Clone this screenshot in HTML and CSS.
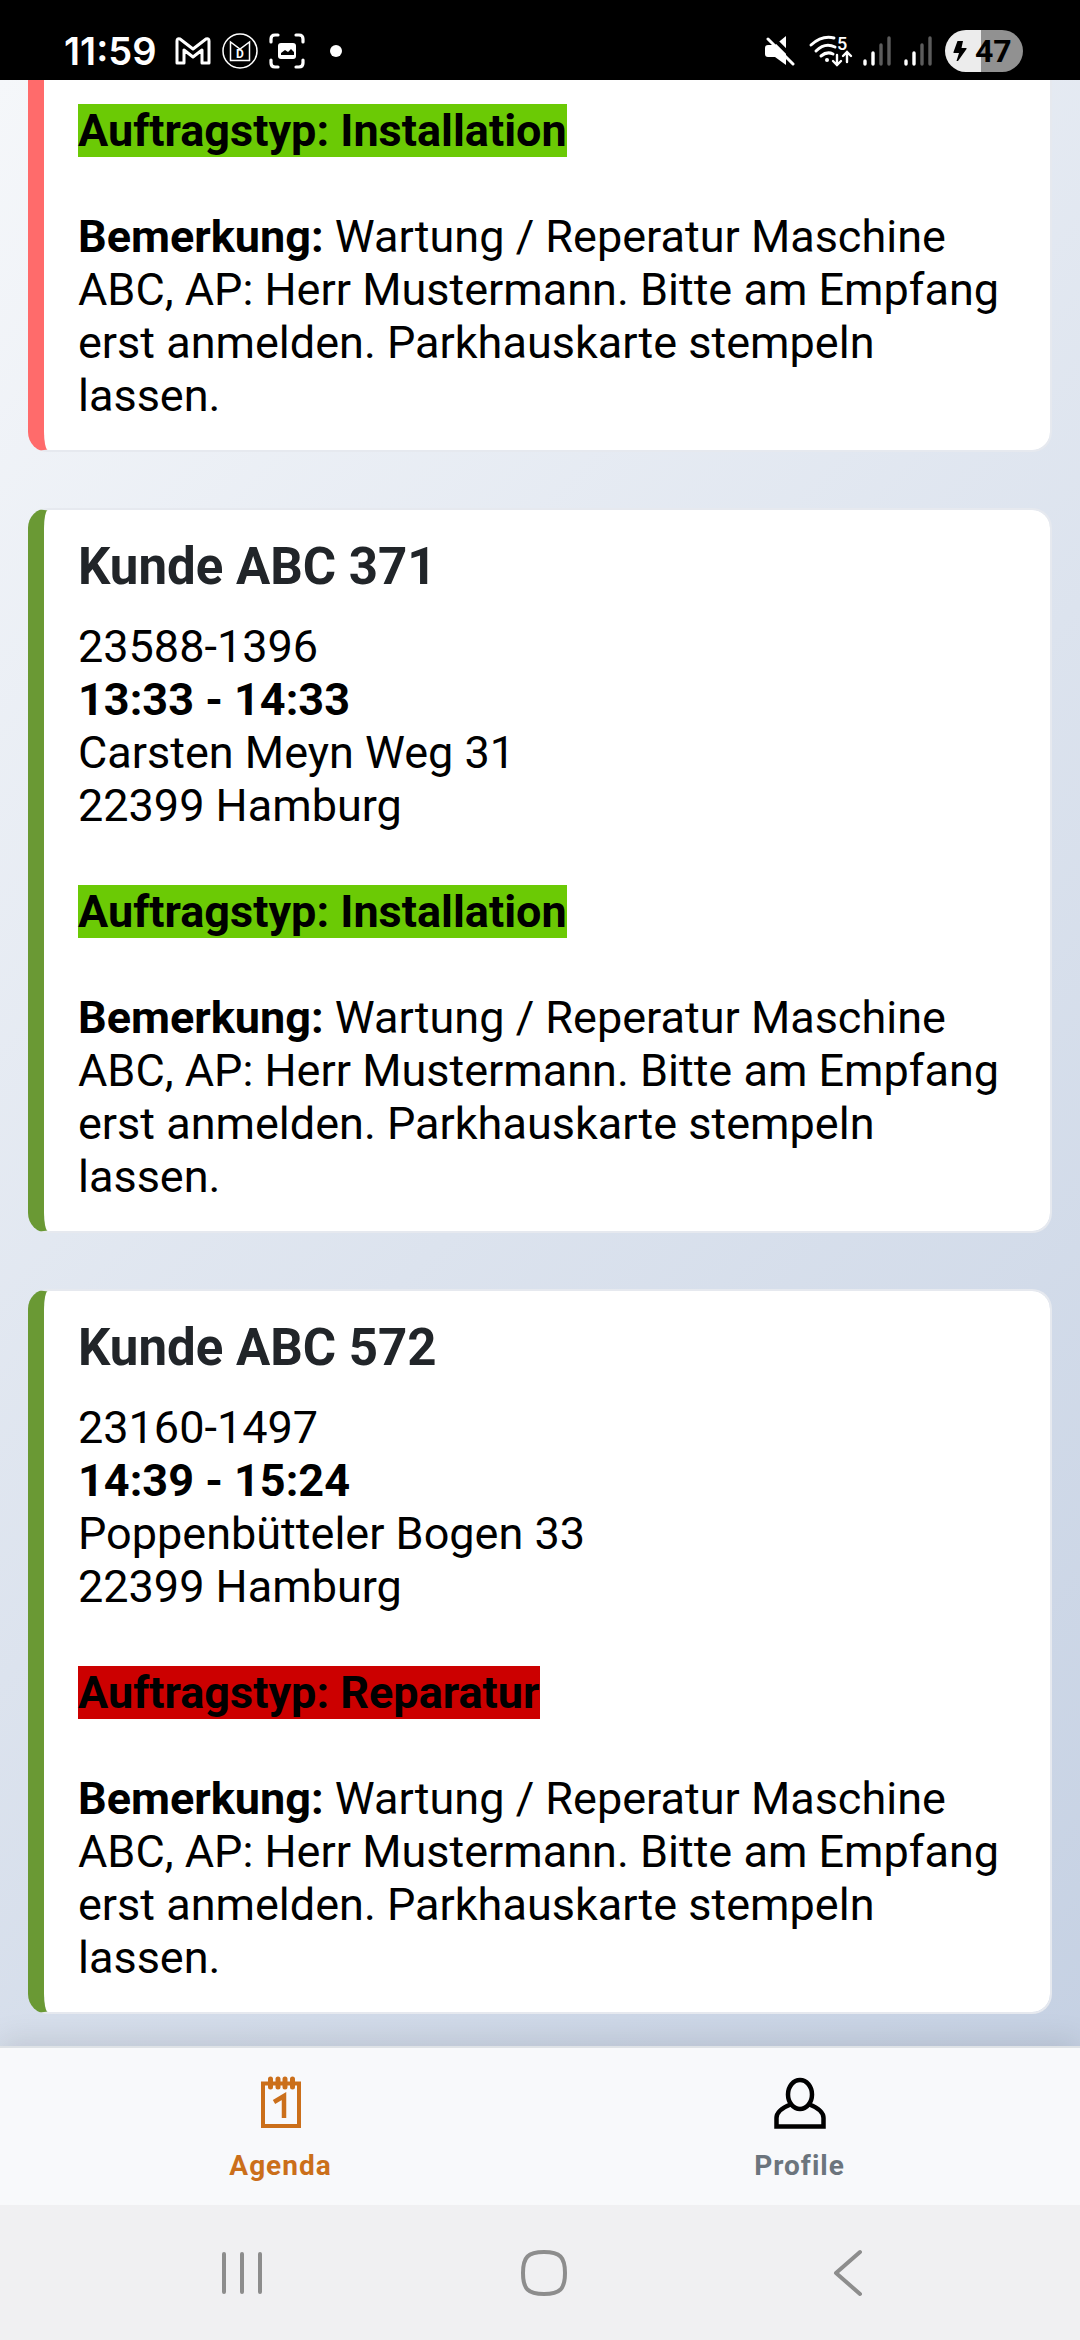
FILE: index.html
```html
<!DOCTYPE html>
<html lang="de">
<head>
<meta charset="utf-8">
<meta name="viewport" content="width=device-width, initial-scale=1">
<title>Agenda</title>
<link rel="stylesheet" href="styles.css">
</head>
<body>
<header class="status">
  <div class="status-left">
    <span class="clock">11:59</span>
    <svg width="36" height="30" viewBox="0 0 36 30" fill="none" stroke="#fff" stroke-width="3" stroke-linejoin="round"><path d="M2 27V5Q2 2 5 3L18 13L31 3Q34 2 34 5V27H27V14L18 21L9 14V27Z"/></svg>
    <svg width="36" height="36" viewBox="0 0 36 36" fill="none" stroke="#fff" stroke-width="1.500"><circle cx="18" cy="18" r="17"/><path d="M8.500 27.500V9L18 16L27.500 9V27.500Z"/><text class="badge-letter" x="14" y="25">D</text></svg>
    <svg width="36" height="36" viewBox="0 0 36 36" fill="none" stroke="#fff" stroke-width="3.200" stroke-linecap="round"><path d="M2 9V6Q2 2 6 2H9M27 2H30Q34 2 34 6V9M34 27V30Q34 34 30 34H27M9 34H6Q2 34 2 30V27"/><rect x="9" y="10" width="18" height="16" rx="3" fill="#fff" stroke="none"/><path d="M12 22V20L16 17L19 19L22 16L25 19V22Z" fill="#000" stroke="none"/></svg>
    <span class="dot"></span>
  </div>
  <div class="status-right">
    <svg width="30" height="30" viewBox="0 0 30 30"><path d="M3 9H10L21 0V29L10 21H3Q0 21 0 18V12Q0 9 3 9Z" fill="#fff"/><path d="M4 -2L32 26" stroke="#000" stroke-width="4"/><path d="M3 3L28 28" stroke="#fff" stroke-width="3" stroke-linecap="round"/></svg>
    <svg class="wifi" width="44" height="32" viewBox="0 0 44 32" fill="none" stroke="#fff" stroke-width="3" stroke-linecap="round"><path d="M2 10Q13 0 25 3M7 16Q16 7 26 12M12 21Q18 16 24 19"/><circle cx="18" cy="25" r="2" fill="#fff" stroke="none"/><text class="wifi-band" x="28" y="15">5</text><path d="M28 20V30M24 26L28 30L32 26M38 27V18M34 21L38 17L42 21" stroke-width="2.400"/></svg>
    <svg class="signal" width="28" height="30" viewBox="0 0 28 30" stroke="#fff" stroke-width="3.400" stroke-linecap="round"><path d="M2 25V28M10 17V28"/><path d="M18 9V28M26 2V28" stroke="#5c5c5c"/></svg>
    <svg class="signal" width="28" height="30" viewBox="0 0 28 30" stroke="#fff" stroke-width="3.400" stroke-linecap="round"><path d="M2 25V28M10 17V28"/><path d="M18 9V28M26 2V28" stroke="#5c5c5c"/></svg>
    <span class="battery"><svg width="14" height="22" viewBox="0 0 14 22"><path d="M4.500 1H10L8.500 8H13Q14 8 13.500 9L5 21H3.500L6 13H1Q0 13 0.500 12Z" fill="#000"/></svg>47</span>
  </div>
</header>

<div class="app">
  <main class="agenda">
    <article class="card card-late card-scrolled">
      <p><strong class="tag-install">Auftragstyp: Installation</strong></p>
      <p class="note"><strong>Bemerkung:</strong> Wartung / Reperatur Maschine ABC, AP: Herr Mustermann. Bitte am Empfang erst anmelden. Parkhauskarte stempeln lassen.</p>
    </article>

    <article class="card">
      <h2 class="customer">Kunde ABC 371</h2>
      <p>23588-1396</p>
      <p><strong>13:33 - 14:33</strong></p>
      <p>Carsten Meyn Weg 31</p>
      <p>22399 Hamburg</p>
      <p class="note"><strong class="tag-install">Auftragstyp: Installation</strong></p>
      <p class="note"><strong>Bemerkung:</strong> Wartung / Reperatur Maschine ABC, AP: Herr Mustermann. Bitte am Empfang erst anmelden. Parkhauskarte stempeln lassen.</p>
    </article>

    <article class="card">
      <h2 class="customer">Kunde ABC 572</h2>
      <p>23160-1497</p>
      <p><strong>14:39 - 15:24</strong></p>
      <p>Poppenbütteler Bogen 33</p>
      <p>22399 Hamburg</p>
      <p class="note"><strong class="tag-repair">Auftragstyp: Reparatur</strong></p>
      <p class="note"><strong>Bemerkung:</strong> Wartung / Reperatur Maschine ABC, AP: Herr Mustermann. Bitte am Empfang erst anmelden. Parkhauskarte stempeln lassen.</p>
    </article>
  </main>

  <nav class="tabs">
    <a class="tab tab-active" href="#agenda">
      <svg width="56" height="56" viewBox="0 0 56 56" fill="none" stroke="currentColor" stroke-width="4"><path d="M10 8.500H46V51H10Z"/><path d="M17.500 4V12M25 4V12M32 4V12M39.500 4V12" stroke-width="5" stroke-linecap="round"/><path d="M21 27L31 21V43" stroke-width="4.500"/></svg>
      <span>Agenda</span>
    </a>
    <a class="tab" href="#profile">
      <svg width="56" height="56" viewBox="0 0 56 56" fill="none" stroke="#000" stroke-width="4.500"><ellipse cx="28" cy="19.500" rx="12" ry="14.500"/><path d="M18.500 29.500Q4.500 35 4.500 43V51.500H51.500V43Q51.500 35 37.500 29.500"/></svg>
      <span>Profile</span>
    </a>
  </nav>
</div>

<footer class="system">
  <button class="key" type="button" aria-label="Letzte Apps"><svg width="48" height="48" viewBox="0 0 48 48"><path d="M6 5V43M24 5V43M42 5V43"/></svg></button>
  <button class="key" type="button" aria-label="Home"><svg width="48" height="48" viewBox="0 0 48 48"><path d="M24 3C40 3 45 8 45 24S40 45 24 45S3 40 3 24S8 3 24 3Z"/></svg></button>
  <button class="key" type="button" aria-label="Zurück"><svg width="48" height="48" viewBox="0 0 48 48"><path d="M37 3L13 24L37 45"/></svg></button>
</footer>
</body>
</html>
```

FILE: styles.css
```css
* { box-sizing: border-box; }

body {
  margin: 0;
  min-height: 100vh;
  display: flex;
  flex-direction: column;
  font-family: Roboto, "Liberation Sans", sans-serif;
  font-size: 45px;
  line-height: 53px;
  color: #000;
}

p, h2 { margin: 0; }
svg { display: block; flex: none; }

.status {
  height: 80px;
  padding: 22px 57px 0 64px;
  display: flex;
  justify-content: space-between;
  background: #000;
  color: #fff;
}

.status-left, .status-right {
  height: 58px;
  display: flex;
  align-items: center;
}
.status-left { gap: 11px; }

.clock {
  font-family: Inter, Roboto, sans-serif;
  font-size: 38px;
  font-weight: 600;
  margin-right: 8px;
}

.badge-letter {
  fill: #fff;
  stroke: none;
  font-size: 12px;
  font-weight: 700;
}

.wifi-band {
  fill: #fff;
  stroke: none;
  font-size: 18px;
  font-weight: 500;
}

.dot {
  width: 12px;
  height: 12px;
  margin-left: 14px;
  border-radius: 50%;
  background: #fff;
}

.wifi { margin: 0 10px 0 14px; overflow: visible; }
.signal { margin-right: 13px; }

.battery {
  width: 78px;
  height: 42px;
  display: flex;
  align-items: center;
  gap: 8px;
  padding-left: 8px;
  border-radius: 21px;
  background: linear-gradient(90deg, #ececec 46%, #919191 46%);
  color: #000;
  font-size: 32px;
  font-weight: 700;
}

.app {
  flex: 1;
  display: flex;
  flex-direction: column;
  background: linear-gradient(135deg, #f5f7fa 0%, #c3cfe2 100%);
}

.agenda {
  flex: 1;
  display: flex;
  flex-direction: column;
  gap: 56px;
  padding: 0 28px 32px;
}

.card {
  padding: 28px 32px 28px 34px;
  border: 2px solid #e6e9ef;
  border-left: 16px solid #6a9934;
  border-radius: 20px;
  background: #fff;
  background-clip: padding-box;
}

.card-late { border-left-color: #ff6b6b; }

/* Upper part of this card is scrolled beneath the status bar. */
.card-scrolled {
  padding-top: 24px;
  border-top: 0;
  border-top-left-radius: 0;
  border-top-right-radius: 0;
}

.customer {
  margin-bottom: 24px;
  font-size: 51px;
  line-height: 58px;
  font-weight: 700;
  color: #212529;
}

.note { margin-top: 53px; }

.tag-install { background: #6bca05; }
.tag-repair { background: #cc0000; }

.tabs {
  display: grid;
  grid-template-columns: 1fr 1fr;
  padding: 27px 21px 22px;
  border-top: 2px solid #dee2e6;
  background: #f8f9fb;
  box-shadow: 0 -6px 28px rgba(0, 0, 0, 0.1);
}

.tab {
  display: flex;
  flex-direction: column;
  align-items: center;
  gap: 18px;
  color: #6c757d;
  font-size: 28px;
  line-height: 34px;
  font-weight: 700;
  letter-spacing: 1px;
  text-decoration: none;
}
.tab-active { color: #cb6f1a; }

.system {
  display: grid;
  grid-template-columns: repeat(3, 1fr);
  height: 135px;
  padding: 0 82px 0 91px;
  background: #f0f0f2;
}

.key {
  display: flex;
  align-items: center;
  justify-content: center;
  padding: 0;
  border: 0;
  background: none;
}
.key svg {
  fill: none;
  stroke: #8d8d8d;
  stroke-width: 4;
  stroke-linecap: round;
  stroke-linejoin: round;
}
```
